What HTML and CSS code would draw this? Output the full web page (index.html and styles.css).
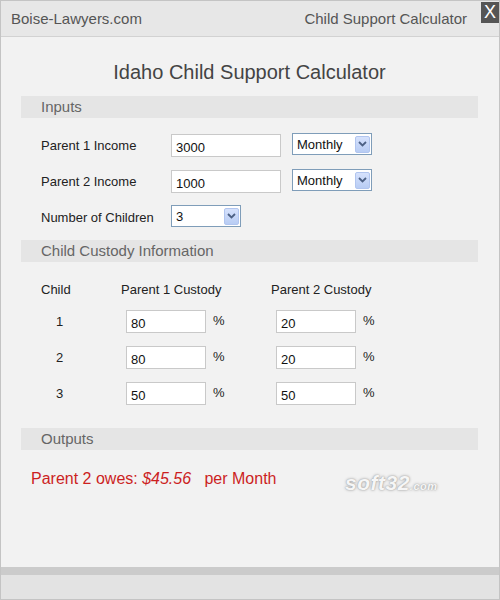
FILE: index.html
```html
<!DOCTYPE html>
<html>
<head>
<meta charset="utf-8">
<link rel="stylesheet" href="styles.css">
</head>
<body>
<div class="window">
  <div class="titlebar">
    <span class="site">Boise-Lawyers.com</span>
    <span class="apptitle">Child Support Calculator</span>
    <span class="close">X</span>
  </div>
  <div class="main">
    <h1 class="heading">Idaho Child Support Calculator</h1>
    <div class="section-head">Inputs</div>
    <div class="inputs">
      <div class="row">
        <span class="label">Parent 1 Income</span>
        <span class="field wide">3000</span>
        <span class="select period"><span class="sel-text">Monthly</span><span class="sel-btn"><svg width="9" height="6" viewBox="0 0 9 6"><path d="M1 1 L4.5 4.5 L8 1" fill="none" stroke="#4d6185" stroke-width="1.8"/></svg></span></span>
      </div>
      <div class="row">
        <span class="label">Parent 2 Income</span>
        <span class="field wide">1000</span>
        <span class="select period"><span class="sel-text">Monthly</span><span class="sel-btn"><svg width="9" height="6" viewBox="0 0 9 6"><path d="M1 1 L4.5 4.5 L8 1" fill="none" stroke="#4d6185" stroke-width="1.8"/></svg></span></span>
      </div>
      <div class="row">
        <span class="label">Number of Children</span>
        <span class="select kids"><span class="sel-text">3</span><span class="sel-btn"><svg width="9" height="6" viewBox="0 0 9 6"><path d="M1 1 L4.5 4.5 L8 1" fill="none" stroke="#4d6185" stroke-width="1.8"/></svg></span></span>
      </div>
    </div>
    <div class="section-head">Child Custody Information</div>
    <div class="custody">
      <div class="crow chead">
        <span class="c1">Child</span>
        <span class="c2">Parent 1 Custody</span>
        <span class="c3">Parent 2 Custody</span>
      </div>
      <div class="crow">
        <span class="c1 num">1</span>
        <span class="c2 cell"><span class="field small">80</span><span class="pct">%</span></span>
        <span class="c3 cell"><span class="field small">20</span><span class="pct">%</span></span>
      </div>
      <div class="crow">
        <span class="c1 num">2</span>
        <span class="c2 cell"><span class="field small">80</span><span class="pct">%</span></span>
        <span class="c3 cell"><span class="field small">20</span><span class="pct">%</span></span>
      </div>
      <div class="crow">
        <span class="c1 num">3</span>
        <span class="c2 cell"><span class="field small">50</span><span class="pct">%</span></span>
        <span class="c3 cell"><span class="field small">50</span><span class="pct">%</span></span>
      </div>
    </div>
    <div class="section-head">Outputs</div>
    <div class="result">Parent 2 owes: <i>$45.56</i>&nbsp;&nbsp; per Month</div>
    <div class="watermark">soft32<span class="wm-com">.com</span></div>
  </div>
  <div class="bottombar"></div>
  <div class="statusbar"></div>
</div>
</body>
</html>
```

FILE: styles.css
```css
html, body {
  margin: 0;
  padding: 0;
  background: #f2f2f2;
}
body {
  font-family: "Liberation Sans", Arial, sans-serif;
  color: #222;
}
.window {
  width: 500px;
  height: 600px;
  box-sizing: border-box;
  border: 1px solid #c4c4c4;
  display: flex;
  flex-direction: column;
  background: #f2f2f2;
}
.titlebar {
  height: 35px;
  flex: none;
  display: flex;
  align-items: center;
  background: #e7e7e7;
  border-bottom: 1px solid #d2d2d2;
  padding-left: 10px;
  font-size: 15px;
  color: #555;
}
.site {
  flex: 1;
}
.apptitle {
  margin-right: 14px;
}
.close {
  align-self: flex-start;
  margin-top: 1px;
  width: 18px;
  height: 21px;
  background: #555;
  color: #fff;
  font-size: 18px;
  line-height: 21px;
  text-align: center;
}
.main {
  flex: 1;
  padding: 0 21px 0 20px;
  position: relative;
}
.heading {
  margin: 23px 0 12px;
  height: 24px;
  line-height: 24px;
  font-size: 20px;
  font-weight: normal;
  text-align: center;
  color: #444;
}
.section-head {
  height: 22px;
  line-height: 22px;
  background: #e5e5e5;
  padding-left: 20px;
  font-size: 15px;
  color: #666;
}
.inputs {
  padding: 15px 0 11px 20px;
  display: flex;
  flex-direction: column;
  gap: 12px;
}
.row {
  height: 24px;
  display: flex;
  align-items: center;
  font-size: 13px;
}
.label {
  width: 130px;
  color: #222;
}
.field {
  box-sizing: border-box;
  height: 23px;
  background: #fff;
  border: 1px solid #c9c9c9;
  font-size: 13px;
  line-height: 21px;
  padding-left: 4px;
  padding-top: 2px;
  color: #111;
}
.field.wide {
  width: 110px;
  margin-right: 11px;
}
.field.small {
  width: 80px;
}
.select {
  box-sizing: border-box;
  height: 22px;
  margin-top: -2px;
  background: #fff;
  border: 1px solid #7f9db9;
  display: flex;
  align-items: center;
  justify-content: space-between;
  padding: 0 1px 0 4px;
  font-size: 13px;
  color: #111;
}
.select.period {
  width: 80px;
}
.select.kids {
  width: 70px;
}
.sel-btn {
  width: 15px;
  height: 17px;
  box-sizing: border-box;
  background: linear-gradient(#d6e2fc, #b8ccf4);
  border: 1px solid #b1c5ef;
  border-radius: 2px;
  display: flex;
  align-items: center;
  justify-content: center;
}
.custody {
  padding: 18px 0 23px 20px;
  display: flex;
  flex-direction: column;
  gap: 12px;
}
.crow {
  height: 24px;
  display: flex;
  align-items: center;
  font-size: 13px;
}
.crow.chead {
  height: 18px;
  margin-bottom: -1px;
}
.c1 {
  width: 80px;
}
.c2 {
  width: 150px;
}
.num {
  padding-left: 15px;
  box-sizing: border-box;
}
.cell {
  display: flex;
  align-items: center;
  padding-left: 5px;
  box-sizing: border-box;
}
.pct {
  margin-left: 7px;
  margin-top: -1px;
}
.result {
  margin-top: 19px;
  padding-left: 10px;
  height: 20px;
  line-height: 20px;
  font-size: 16px;
  color: #cc1f1f;
}
.watermark {
  position: absolute;
  left: 344px;
  top: 434px;
  font-size: 21px;
  font-weight: bold;
  font-style: italic;
  color: #f6f6f6;
  letter-spacing: 0.5px;
  text-shadow: 0 0 3px #999, 0 0 1px #aaa;
}
.wm-com {
  font-size: 11px;
}
.bottombar {
  height: 8px;
  flex: none;
  background: #cbcbcb;
}
.statusbar {
  height: 24px;
  flex: none;
  background: #e3e3e3;
}
```
